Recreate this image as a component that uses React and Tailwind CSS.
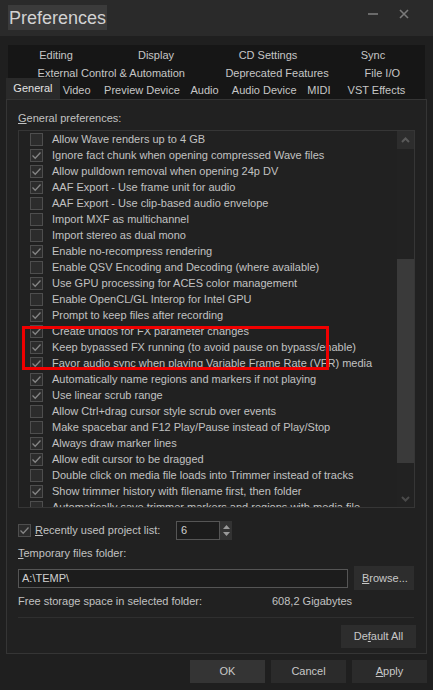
import React from 'react';

const prefs = [
    ['Allow Wave renders up to 4 GB', false],
    ['Ignore fact chunk when opening compressed Wave files', true],
    ['Allow pulldown removal when opening 24p DV', true],
    ['AAF Export - Use frame unit for audio', true],
    ['AAF Export - Use clip-based audio envelope', false],
    ['Import MXF as multichannel', false],
    ['Import stereo as dual mono', false],
    ['Enable no-recompress rendering', true],
    ['Enable QSV Encoding and Decoding (where available)', false],
    ['Use GPU processing for ACES color management', true],
    ['Enable OpenCL/GL Interop for Intel GPU', false],
    ['Prompt to keep files after recording', true],
    ['Create undos for FX parameter changes', true],
    ['Keep bypassed FX running (to avoid pause on bypass/enable)', true],
    ['Favor audio sync when playing Variable Frame Rate (VFR) media', true],
    ['Automatically name regions and markers if not playing', true],
    ['Use linear scrub range', true],
    ['Allow Ctrl+drag cursor style scrub over events', false],
    ['Make spacebar and F12 Play/Pause instead of Play/Stop', false],
    ['Always draw marker lines', true],
    ['Allow edit cursor to be dragged', true],
    ['Double click on media file loads into Trimmer instead of tracks', false],
    ['Show trimmer history with filename first, then folder', true],
    ['Automatically save trimmer markers and regions with media file', false],
];

// tab rows: [label, cell width]
const row1 = [['Editing', 'w-[96px]'], ['Display', 'w-[104px]'], ['CD Settings', 'w-[120px]'], ['Sync', 'w-[90px]']];
const row2 = [['External Control & Automation', 'w-[208px]'], ['Deprecated Features', 'w-[126px]'], ['File I/O', 'w-[86px]']];
const row3 = [['Video', 'w-[35px]'], ['Preview Device', 'w-[101px]'], ['Audio', 'w-[28px]'], ['Audio Device', 'w-[95px]'], ['MIDI', 'w-[18px]'], ['VST Effects', 'w-[101px]']];

const Check = ({ checked }) => (
    <span className="w-[13px] h-[13px] shrink-0 border border-[#4e4e4e] bg-[#2c2c2c] flex items-center justify-center">
        {checked && (
            <svg width="11" height="11" viewBox="0 0 11 11">
                <path d="M1.5 5.5 L4.2 8.2 L9.5 2.5" fill="none" stroke="#858585" strokeWidth="1.3" />
            </svg>
        )}
    </span>
);

const Tab = ({ label, w }) => (
    <div className={`${w} flex justify-center whitespace-nowrap`}>{label}</div>
);

const Button = ({ children, className = '' }) => (
    <button className={`h-[23px] flex items-center justify-center text-[#c8c8c8] ${className}`}>{children}</button>
);

export default function App() {
    return (
        <div className="w-[433px] h-[690px] bg-[#1f1f1f] text-[#c2c2c2] text-[11px] overflow-hidden flex flex-col" style={{ fontFamily: '"Liberation Sans", Arial, sans-serif' }}>
            {/* title bar */}
            <div className="h-[36px] bg-[#2a2a2a] flex items-start shrink-0">
                <div className="ml-[8px] mt-[5px] h-[25px] w-[99px] bg-[#3b3b3b] flex items-center pl-[1px] text-[18px] text-[#d2d2d2] leading-none">Preferences</div>
                <div className="ml-auto mt-[9px] h-[9px] flex items-center gap-[21px] mr-[24px]">
                    <span className="w-[10px] h-[2px] bg-[#6a6a6a]" />
                    <svg width="10" height="10" viewBox="0 0 10 10">
                        <path d="M1 1 L9 9 M9 1 L1 9" stroke="#7a7a7a" strokeWidth="1.6" />
                    </svg>
                </div>
            </div>

            {/* tab strip */}
            <div className="mt-[9px] mx-[8px] bg-[#161616] h-[54px] flex flex-col pt-[1px] text-[#c6c6c6] shrink-0">
                <div className="h-[18px] flex items-center">
                    {row1.map(([l, w]) => <Tab key={l} label={l} w={w} />)}
                </div>
                <div className="h-[18px] flex items-center">
                    {row2.map(([l, w]) => <Tab key={l} label={l} w={w} />)}
                </div>
                <div className="h-[17px] flex items-end -ml-[2px]">
                    <div className="w-[56px] h-[21px] bg-[#2a2a2a] flex items-center justify-center text-[#e2e2e2] self-end">General</div>
                    {row3.map(([l, w]) => (
                        <div key={l} className={`${w} h-[17px] flex items-center justify-center whitespace-nowrap`}>{l}</div>
                    ))}
                </div>
            </div>

            {/* panel */}
            <div className="mx-[6px] h-[555px] border border-[#353535] bg-[#212121] flex flex-col px-[11px] shrink-0">
                <div className="h-[30px] flex items-center pt-[7px]">
                    <span><span className="underline">G</span>eneral preferences:</span>
                </div>
                <div className="relative h-[378px] border border-[#363636] flex">
                    <div className="flex-1 overflow-hidden pl-[11px]">
                        {prefs.map(([label, on]) => (
                            <div key={label} className="h-[16px] flex items-center gap-[9px] whitespace-nowrap">
                                <Check checked={on} />
                                <span>{label}</span>
                            </div>
                        ))}
                    </div>
                    {/* scrollbar */}
                    <div className="w-[17px] flex flex-col bg-[#222222]">
                        <div className="h-[18px] bg-[#2d2d2d] flex items-center justify-center">
                            <svg width="9" height="6" viewBox="0 0 9 6"><path d="M1 5 L4.5 1.5 L8 5" fill="none" stroke="#5a5a5a" strokeWidth="2" /></svg>
                        </div>
                        <div className="h-[110px]" />
                        <div className="h-[204px] bg-[#3a3a3a]" />
                        <div className="flex-1" />
                        <div className="h-[17px] flex items-center justify-center">
                            <svg width="9" height="6" viewBox="0 0 9 6"><path d="M1 1 L4.5 4.5 L8 1" fill="none" stroke="#4a4a4a" strokeWidth="2" /></svg>
                        </div>
                    </div>
                    {/* annotation box */}
                    <div className="absolute left-[3px] top-[195px] w-[307px] h-[44px] border-[3px] border-[#f00000]" />
                </div>

                <div className="mt-[13px] h-[19px] flex items-center">
                    <Check checked />
                    <span className="ml-[4px] w-[141px]"><span className="underline">R</span>ecently used project list:</span>
                    <div className="h-[19px] w-[44px] border border-[#555] bg-[#1c1c1c] flex items-center pl-[4px] text-[#d0d0d0]">6</div>
                    <div className="h-[19px] w-[12px] bg-[#333] flex flex-col items-center justify-center gap-[3px]">
                        <svg width="7" height="4" viewBox="0 0 7 4"><path d="M0 4 L3.5 0 L7 4Z" fill="#9a9a9a" /></svg>
                        <svg width="7" height="4" viewBox="0 0 7 4"><path d="M0 0 L3.5 4 L7 0Z" fill="#9a9a9a" /></svg>
                    </div>
                </div>
                <div className="mt-[5px] h-[16px] flex items-center">
                    <span><span className="underline">T</span>emporary files folder:</span>
                </div>
                <div className="mt-[5px] flex items-center">
                    <div className="w-[330px] h-[19px] border border-[#555] bg-[#1c1c1c] flex items-center pl-[3px] text-[#d0d0d0]">A:\TEMP\</div>
                    <Button className="ml-[6px] w-[60px] h-[24px] bg-[#2d2d2d] justify-start pl-[8px]"><span><span className="underline">B</span>rowse...</span></Button>
                </div>
                <div className="mt-[3px] h-[16px] flex items-center">
                    <span className="w-[254px]">Free storage space in selected folder:</span>
                    <span>608,2 Gigabytes</span>
                </div>
                <div className="mt-[8px] h-[1px] bg-[#2f2f2f] mr-[1px]" />
                <div className="mt-[7px] flex justify-end mr-[-1px]">
                    <Button className="w-[75px] bg-[#2d2d2d]"><span>De<span className="underline">f</span>ault All</span></Button>
                </div>
            </div>

            {/* dialog buttons */}
            <div className="mt-[6px] flex justify-end gap-[6px] pr-[6px]">
                <Button className="w-[75px] bg-[#343434]">OK</Button>
                <Button className="w-[75px] bg-[#2b2b2b]">Cancel</Button>
                <Button className="w-[75px] bg-[#2b2b2b]"><span><span className="underline">A</span>pply</span></Button>
            </div>
        </div>
    );
}
